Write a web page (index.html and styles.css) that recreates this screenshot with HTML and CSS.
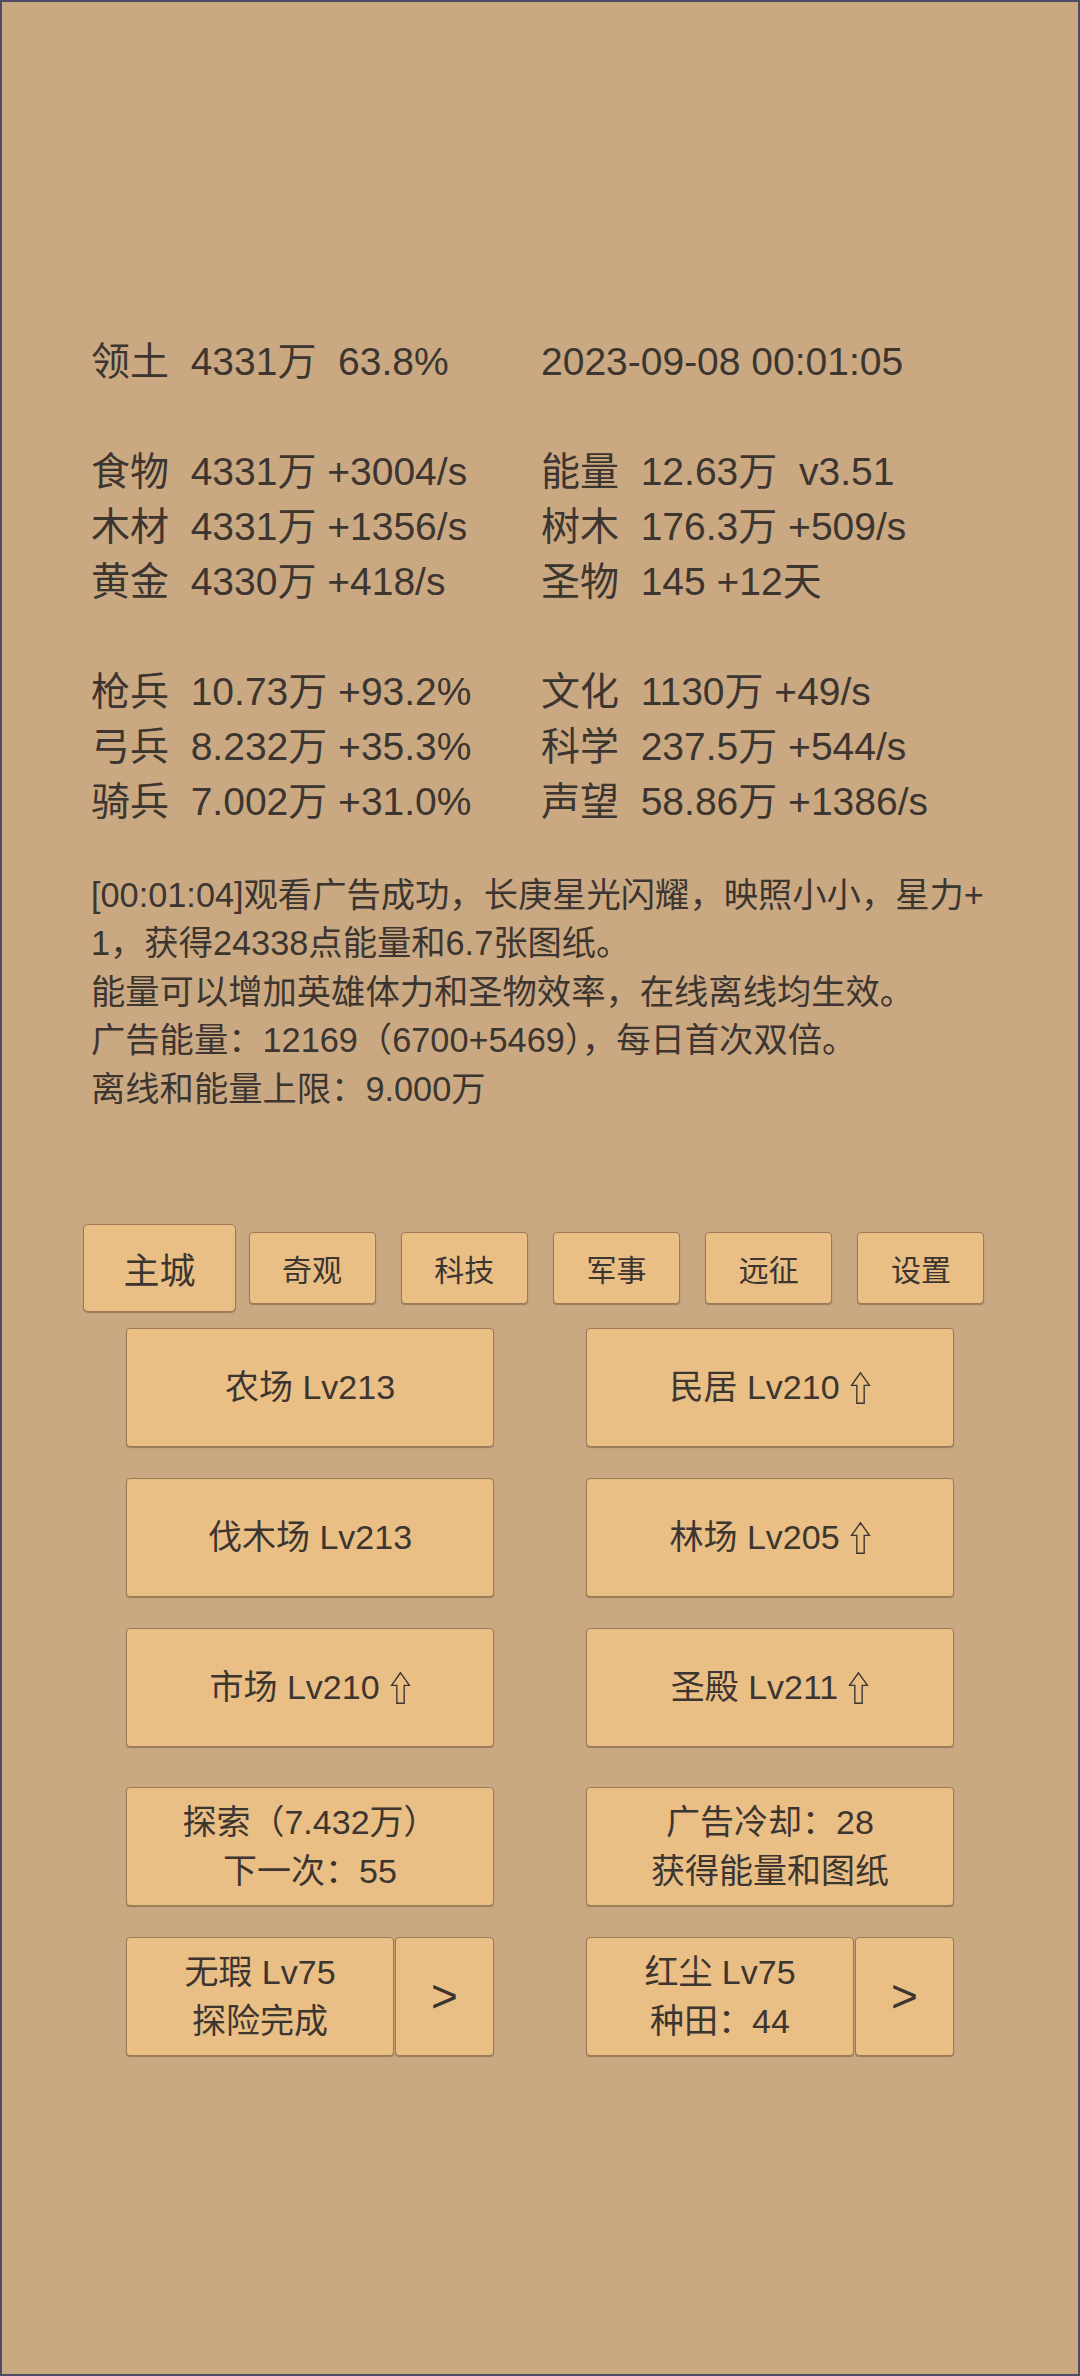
FILE: index.html
```html
<!DOCTYPE html>
<html lang="zh">
<head>
    <meta charset="UTF-8">
    <meta name="viewport" content="width=device-width, initial-scale=1.0">
    <title>领土</title>
    <link rel="stylesheet" href="styles.css">
</head>
<body>
    <div class="screen">
        <div class="stats">
            <div class="col">
                <div class="line">领土  4331万  63.8%</div>
                <div class="line"> </div>
                <div class="line">食物  4331万 +3004/s</div>
                <div class="line">木材  4331万 +1356/s</div>
                <div class="line">黄金  4330万 +418/s</div>
                <div class="line"> </div>
                <div class="line">枪兵  10.73万 +93.2%</div>
                <div class="line">弓兵  8.232万 +35.3%</div>
                <div class="line">骑兵  7.002万 +31.0%</div>
            </div>
            <div class="col">
                <div class="line">2023-09-08 00:01:05</div>
                <div class="line"> </div>
                <div class="line">能量  12.63万  v3.51</div>
                <div class="line">树木  176.3万 +509/s</div>
                <div class="line">圣物  145 +12天</div>
                <div class="line"> </div>
                <div class="line">文化  1130万 +49/s</div>
                <div class="line">科学  237.5万 +544/s</div>
                <div class="line">声望  58.86万 +1386/s</div>
            </div>
        </div>

        <div class="log">
            [00:01:04]观看广告成功，长庚星光闪耀，映照小小，星力+<br>
            1，获得24338点能量和6.7张图纸。<br>
            能量可以增加英雄体力和圣物效率，在线离线均生效。<br>
            广告能量：12169（6700+5469），每日首次双倍。<br>
            离线和能量上限：9.000万
        </div>

        <div class="tabs">
            <div class="tab-slot"><button class="tab active">主城</button></div>
            <div class="tab-slot"><button class="tab">奇观</button></div>
            <div class="tab-slot"><button class="tab">科技</button></div>
            <div class="tab-slot"><button class="tab">军事</button></div>
            <div class="tab-slot"><button class="tab">远征</button></div>
            <div class="tab-slot"><button class="tab">设置</button></div>
        </div>

        <div class="buildings">
            <button class="btn">农场 Lv213</button>
            <button class="btn">民居 Lv210 <svg class="up" viewBox="0 0 20 32"><path d="M10 1.5 L18.5 13.5 L13.5 13.5 L13.5 30.5 L6.5 30.5 L6.5 13.5 L1.5 13.5 Z"/></svg></button>
            <button class="btn">伐木场 Lv213</button>
            <button class="btn">林场 Lv205 <svg class="up" viewBox="0 0 20 32"><path d="M10 1.5 L18.5 13.5 L13.5 13.5 L13.5 30.5 L6.5 30.5 L6.5 13.5 L1.5 13.5 Z"/></svg></button>
            <button class="btn">市场 Lv210 <svg class="up" viewBox="0 0 20 32"><path d="M10 1.5 L18.5 13.5 L13.5 13.5 L13.5 30.5 L6.5 30.5 L6.5 13.5 L1.5 13.5 Z"/></svg></button>
            <button class="btn">圣殿 Lv211 <svg class="up" viewBox="0 0 20 32"><path d="M10 1.5 L18.5 13.5 L13.5 13.5 L13.5 30.5 L6.5 30.5 L6.5 13.5 L1.5 13.5 Z"/></svg></button>
            <button class="btn two-line spaced">探索（7.432万）<br>下一次：55</button>
            <button class="btn two-line spaced">广告冷却：28<br>获得能量和图纸</button>
            <div class="split">
                <button class="btn two-line">无瑕 Lv75<br>探险完成</button>
                <button class="btn next">&gt;</button>
            </div>
            <div class="split">
                <button class="btn two-line">红尘 Lv75<br>种田：44</button>
                <button class="btn next">&gt;</button>
            </div>
        </div>
    </div>
</body>
</html>
```

FILE: styles.css
```css
body {
    margin: 0;
    padding: 0;
    background: #4c4b63;
    font-family: "Liberation Sans", "Noto Sans CJK SC", sans-serif;
    color: #3c3530;
}
.screen {
    height: 2376px;
    box-sizing: border-box;
    border: 2px solid #4c4b63;
    background: #caa982;
    padding-top: 332px;
}
.stats {
    display: flex;
    padding-left: 89px;
    font-size: 39px;
    line-height: 55px;
}
.col {
    width: 450px;
}
.line {
    height: 55px;
    white-space: pre;
}
.log {
    margin-top: 42px;
    padding-left: 89px;
    font-size: 34.3px;
    line-height: 48.4px;
    white-space: nowrap;
}
.tabs {
    display: flex;
    align-items: center;
    width: 914px;
    height: 88px;
    margin: 111px 0 0 81px;
}
.tab-slot {
    flex: 1;
    display: flex;
    justify-content: center;
}
button {
    font-family: inherit;
    color: inherit;
    padding: 0;
    background: #e9bf86;
    border: 1px solid #9b7b55;
    border-radius: 4px;
    box-shadow: 0 1px 1px rgba(60, 40, 20, 0.35);
    cursor: pointer;
}
.tab {
    width: 127px;
    height: 72px;
    font-size: 30px;
}
.tab.active {
    width: 153px;
    height: 88px;
    font-size: 36px;
    border-radius: 5px;
}
.buildings {
    display: grid;
    grid-template-columns: 368px 368px;
    grid-template-rows: 119px 119px 119px 128px 119px;
    column-gap: 92px;
    row-gap: 31px;
    margin: 16px 0 0 124px;
}
.btn {
    font-size: 34px;
    line-height: 49px;
    display: flex;
    align-items: center;
    justify-content: center;
    text-align: center;
}
.btn.spaced {
    margin-top: 9px;
}
.split {
    display: flex;
    gap: 1px;
}
.split .two-line {
    flex: 1;
}
.next {
    width: 99px;
    font-size: 46px;
}
.up {
    width: 21px;
    height: 34px;
    margin-left: 10px;
    fill: none;
    stroke: #3c3530;
    stroke-width: 1.3;
    stroke-linejoin: miter;
}
```
